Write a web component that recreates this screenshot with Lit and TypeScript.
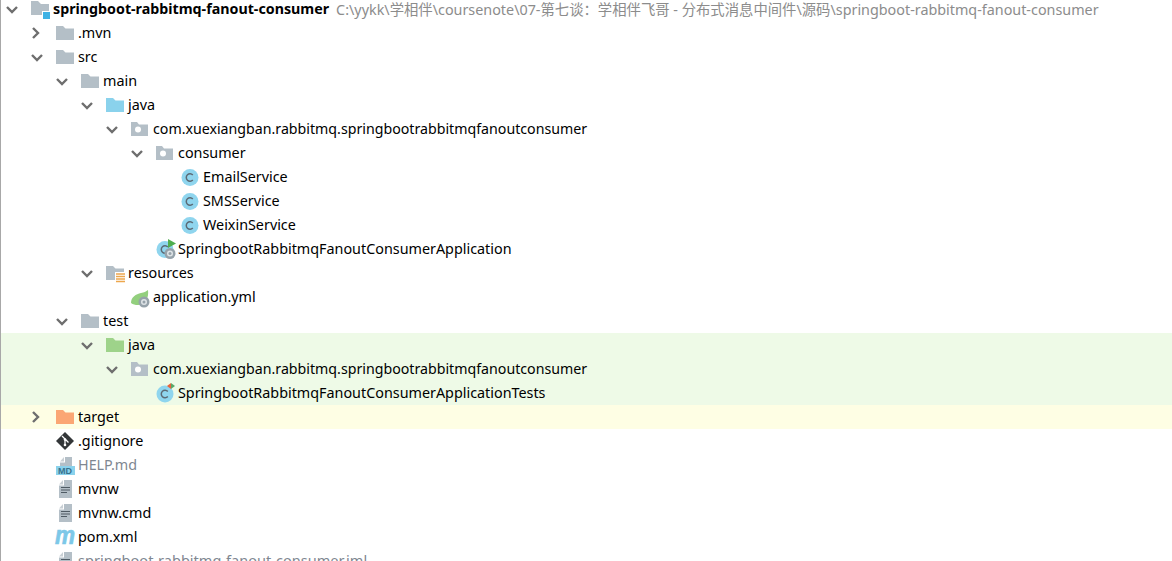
import { LitElement, html, css, svg } from "lit";
import { customElement } from "lit/decorators.js";

const folder = (c: string) => svg`<path d="M0 2h7l2.500 2.500H18V16H0z" fill="${c}"/>`;
const pkg = svg`<path d="M0 2h6l2 2.500h9V16H0z" fill="#b4bfc7"/><circle cx="7" cy="9.500" r="3" fill="#fff"/>`;
const classC = (x = 9, y = 9.5) => svg`<circle cx="${x}" cy="${y}" r="8.500" fill="#8fd5ee"/><path d="M${x + 2.800} ${y - 2.400}a3.700 3.700 0 1 0 0 4.800" fill="none" stroke="#5c6a75" stroke-width="1.500"/>`;
const gear = (x: number, y: number) => svg`<circle cx="${x}" cy="${y}" r="5.500" fill="#96a2aa"/><circle cx="${x}" cy="${y}" r="3" fill="#dfe4e7"/><circle cx="${x}" cy="${y}" r="1.500" fill="#96a2aa"/>`;
const file = svg`<path d="M7 0v4.500H3z" fill="#c9d0d5"/><path d="M8 0h8v18H3V5.500h5z" fill="#b4bfc7"/><path d="M5 7.500h9M5 10h9M5 12.500h6" stroke="#4f5b64" stroke-width="1.200"/>`;

const icons: Record<string, unknown> = {
  module: svg`<path d="M0 1h7l3 3h8v11H0z" fill="#b4bfc7"/><rect x="11" y="11" width="9" height="9" fill="#fff"/><rect x="12" y="12" width="7" height="7" fill="#3fb2e4"/>`,
  grey: folder("#b4bfc7"),
  blue: folder("#8ad2ec"),
  green: folder("#9ed38a"),
  orange: folder("#fba674"),
  pkg,
  cls: classC(),
  app: svg`${classC(9, 9.5)}<path d="M12 -1l8 4.500-8 4.500z" fill="#4fae4f"/>${gear(14, 13.5)}`,
  res: svg`${folder("#b4bfc7")}<rect x="9" y="8" width="11" height="11" fill="#fff"/><path d="M10 10h9M10 12.500h9M10 15h9M10 17.500h9" stroke="#eda74d" stroke-width="1.300"/>`,
  yml: svg`<path d="M0 15C0 9 5 6 10 5 13 4.500 15 3.500 17 2 18 9 15 17 7 17 4 17 2 16.500 0 15z" fill="#93cf7e"/>${gear(13, 14)}`,
  test: svg`${classC(9, 10)}<path d="M15 -1v6l-4-3z" fill="#e8623c"/><path d="M15 -1l4 3-4 3z" fill="#59a869"/>`,
  git: svg`<path d="M9 0l9 9-9 9-9-9z" fill="#333638"/><path d="M6 4l6.500 6.500M9 7.500v6" stroke="#fff" stroke-width="1.300"/><circle cx="9" cy="7.500" r="1.300" fill="#fff"/><circle cx="9" cy="13" r="1.300" fill="#fff"/>`,
  md: svg`<path d="M8 1v4.500H4z" fill="#c9d0d5"/><path d="M9 1h7v9H4V6.500h5z" fill="#b4bfc7"/><rect y="10" width="19" height="9" fill="#8ad2ec"/><text x="2" y="17.700" font-size="9" font-weight="700" font-family="Liberation Sans" fill="#38718d">MD</text>`,
  file,
  mvn: svg`<text x="-1" y="15.500" font-size="25" font-weight="700" font-style="italic" font-family="Liberation Sans" textLength="20" lengthAdjust="spacingAndGlyphs" fill="#7cc8e8" stroke="#7cc8e8" stroke-width="0.700">m</text>`,
};

type Row = { d: number; a?: "o" | "c"; i: string; t: string; cl?: string; bg?: string };
const pkgName = "com.xuexiangban.rabbitmq.springbootrabbitmqfanoutconsumer";
const rows: Row[] = [
  { d: 0, a: "o", i: "module", t: "springboot-rabbitmq-fanout-consumer", cl: "bold" },
  { d: 1, a: "c", i: "grey", t: ".mvn" },
  { d: 1, a: "o", i: "grey", t: "src" },
  { d: 2, a: "o", i: "grey", t: "main" },
  { d: 3, a: "o", i: "blue", t: "java" },
  { d: 4, a: "o", i: "pkg", t: pkgName, cl: "pkgname" },
  { d: 5, a: "o", i: "pkg", t: "consumer" },
  { d: 6, i: "cls", t: "EmailService" },
  { d: 6, i: "cls", t: "SMSService" },
  { d: 6, i: "cls", t: "WeixinService" },
  { d: 5, i: "app", t: "SpringbootRabbitmqFanoutConsumerApplication" },
  { d: 3, a: "o", i: "res", t: "resources" },
  { d: 4, i: "yml", t: "application.yml" },
  { d: 2, a: "o", i: "grey", t: "test" },
  { d: 3, a: "o", i: "green", t: "java", bg: "tested" },
  { d: 4, a: "o", i: "pkg", t: pkgName, cl: "pkgname", bg: "tested" },
  { d: 5, i: "test", t: "SpringbootRabbitmqFanoutConsumerApplicationTests", bg: "tested" },
  { d: 1, a: "c", i: "orange", t: "target", bg: "excluded" },
  { d: 1, i: "git", t: ".gitignore" },
  { d: 1, i: "md", t: "HELP.md", cl: "muted" },
  { d: 1, i: "file", t: "mvnw" },
  { d: 1, i: "file", t: "mvnw.cmd" },
  { d: 1, i: "mvn", t: "pom.xml" },
  { d: 1, i: "file", t: "springboot-rabbitmq-fanout-consumer.iml", cl: "muted iml" },
];

@customElement("app-root")
export class AppRoot extends LitElement {
  static styles = css`
    :host {
      display: block;
      height: 561px;
      overflow: hidden;
      background: #fff;
      font-family: "Noto Sans", "Noto Sans CJK SC", sans-serif;
      font-size: 14.35px;
      color: #000;
    }
    .tree {
      margin-top: -3px;
      border-left: 1px solid #a8a8a8;
    }
    .row {
      display: flex;
      align-items: center;
      height: 24px;
      white-space: nowrap;
    }
    .tested { background: #eefae7; }
    .excluded { background: #fefee4; }
    .arrow {
      flex: none;
      width: 30px;
      height: 24px;
    }
    .ico {
      flex: none;
      width: 19px;
      height: 18px;
      margin-right: 3px;
      overflow: visible;
    }
    .label, .path { margin-top: -2px; }
    .bold { font-weight: 700; font-size: 14.25px; }
    .pkgname { font-size: 14.2px; }
    .muted { color: #7f8791; }
    .iml { font-size: 14.55px; }
    .path { color: #8c8c8c; margin-left: 7px; }
  `;

  render() {
    return html`<div class="tree">
      ${rows.map(
        (r) => html`<div class="row ${r.bg ?? ""}" style="padding-left:${25 * r.d}px">
          <svg class="arrow" viewBox="0 0 30 24">
            ${r.a === "o"
              ? svg`<path d="M6 10l5 5 5-5" fill="none" stroke="#6e6e6e" stroke-width="2.400"/>`
              : r.a === "c"
              ? svg`<path d="M7 7l5 5-5 5" fill="none" stroke="#6e6e6e" stroke-width="2.400"/>`
              : ""}
          </svg>
          <svg class="ico" viewBox="0 0 19 18">${icons[r.i]}</svg>
          <span class="label ${r.cl ?? ""}">${r.t}</span>
          ${r.d === 0
            ? html`<span class="path">C:\\yykk\\学相伴\\coursenote\\07-第七谈：学相伴飞哥 - 分布式消息中间件\\源码\\springboot-rabbitmq-fanout-consumer</span>`
            : ""}
        </div>`
      )}
    </div>`;
  }
}
